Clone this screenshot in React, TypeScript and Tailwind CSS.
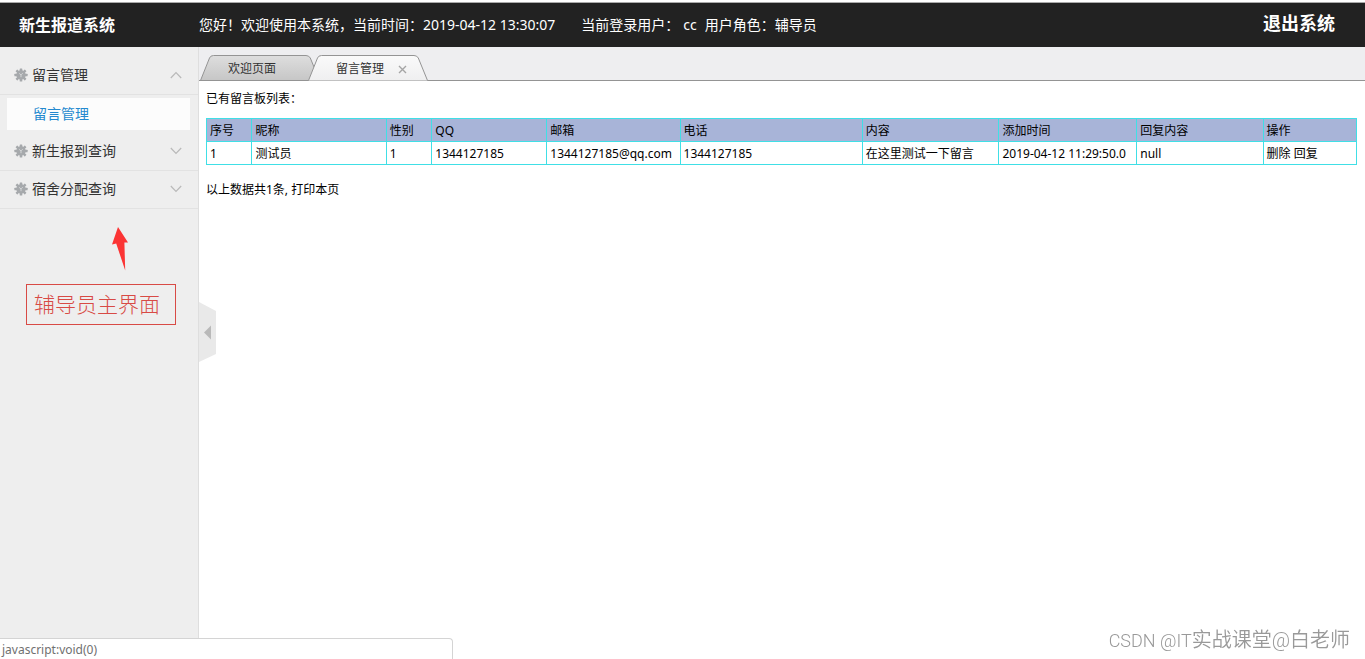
import { useState } from "react";

const columns = [
  { title: "序号", width: "w-[3.9%]", value: "1" },
  { title: "昵称", width: "w-[11.7%]", value: "测试员" },
  { title: "性别", width: "w-[3.9%]", value: "1" },
  { title: "QQ", width: "w-[10%]", value: "1344127185" },
  { title: "邮箱", width: "w-[11.6%]", value: "1344127185@qq.com" },
  { title: "电话", width: "w-[15.9%]", value: "1344127185" },
  { title: "内容", width: "w-[11.9%]", value: "在这里测试一下留言" },
  { title: "添加时间", width: "w-[12%]", value: "2019-04-12 11:29:50.0" },
  { title: "回复内容", width: "w-[11%]", value: "null" },
];

function Gear() {
  const teeth = [0, 45, 90, 135];
  return (
    <svg viewBox="0 0 14 14" className="h-3.5 w-3.5 shrink-0" aria-hidden="true">
      <g fill="#a6a9ac">
        {teeth.map((angle) => (
          <rect key={angle} x="5.7" y="0.4" width="2.6" height="13.2" rx="0.5" transform={`rotate(${angle} 7 7)`} />
        ))}
        <circle cx="7" cy="7" r="4.7" />
      </g>
      <path d="M5.2 5.4l1.8 1.5 1.7-1.7M7 7v2.2" fill="none" stroke="#d9dbdd" strokeWidth="0.9" />
    </svg>
  );
}

function Chevron({ up }: { up: boolean }) {
  return (
    <svg viewBox="0 0 12 8" className="h-2 w-3 shrink-0" fill="none" stroke="#b9b9b9" strokeWidth="1.2" aria-hidden="true">
      <path d={up ? "M0.8 7L6 1.5L11.2 7" : "M0.8 1L6 6.5L11.2 1"} />
    </svg>
  );
}

function MenuHead({ label, open, tall, onClick }: { label: string; open: boolean; tall?: boolean; onClick?: () => void }) {
  return (
    <button
      type="button"
      aria-expanded={open}
      onClick={onClick}
      className={`flex w-full items-center gap-1 border-b border-[#e2e2e2] pr-4 pl-3.5 text-left text-sm text-[#333] ${tall ? "h-12 pt-2" : "h-[38px] pb-0.5"}`}
    >
      <Gear />
      <span className="grow">{label}</span>
      <Chevron up={open} />
    </button>
  );
}

function TabShape({ active }: { active: boolean }) {
  return (
    <svg viewBox="0 0 120 26" preserveAspectRatio="none" className="absolute inset-0 h-full w-full" aria-hidden="true">
      <defs>
        <linearGradient id="idle-tab" x1="0" y1="0" x2="0" y2="1">
          <stop offset="0" stopColor="#dedede" />
          <stop offset="1" stopColor="#c6c6c6" />
        </linearGradient>
        <linearGradient id="active-tab" x1="0" y1="0" x2="0" y2="1">
          <stop offset="0" stopColor="#fafafa" />
          <stop offset="1" stopColor="#efeff0" />
        </linearGradient>
      </defs>
      <path
        d="M0.5 25.5L9.5 3Q10.5 0.5 13.5 0.5H106Q109 0.5 110.3 3L119.5 25.5"
        fill={active ? "url(#active-tab)" : "url(#idle-tab)"}
        stroke="#949494"
      />
      {!active && <path d="M0 25.5H120" stroke="#949494" />}
    </svg>
  );
}

export default function App() {
  const [open, setOpen] = useState(true);

  return (
    <div className="flex min-h-screen flex-col bg-white font-['Noto_Sans','Noto_Sans_CJK_SC',sans-serif] text-xs text-black">
      <header className="mt-0.5 flex h-[45px] items-center border-t border-[#aaa] bg-[#222] text-sm text-white">
        <h1 className="w-[199px] shrink-0 pl-[19px] text-base font-bold">新生报道系统</h1>
        <p className="flex grow whitespace-pre">
          <span>您好！欢迎使用本系统，当前时间：2019-04-12 13:30:07</span>
          <span className="ml-[26px]">当前登录用户：</span>
          <span className="ml-1">cc</span>
          <span className="ml-2">用户角色：辅导员</span>
        </p>
        <a href="#logout" className="mr-[30px] pb-1 text-lg font-bold">退出系统</a>
      </header>

      <div className="flex grow">
        <aside className="w-[199px] shrink-0 border-r border-[#dedede] bg-[#eee]">
          <nav>
            <MenuHead label="留言管理" open={open} tall onClick={() => setOpen(!open)} />
            {open && (
              <a href="#messages" className="mr-2 ml-[7px] mt-[3px] flex h-8 items-center bg-[#fcfcfc] pl-[26px] text-sm text-[#2489cf]">
                留言管理
              </a>
            )}
            <div className="mt-[3px]">
              <MenuHead label="新生报到查询" open={false} />
              <MenuHead label="宿舍分配查询" open={false} />
            </div>
          </nav>
          <svg viewBox="0 0 18 46" className="mt-4 ml-[111px] h-[46px] w-[18px]" aria-hidden="true">
            <path d="M7 2L17 17.5L13.4 17.5L14.2 45.5L5.2 18.5L1 19.5Z" fill="#fb3434" />
          </svg>
          <p className="mx-[22px] mt-[13px] ml-[26px] flex h-[41px] items-center border border-[#d84a45] pb-0.5 pl-[7px] text-[21px] font-light whitespace-nowrap text-[#d84a45]">
            辅导员主界面
          </p>
        </aside>

        <main className="relative min-w-0 grow">
          <div className="flex h-[34px] items-end border-b border-[#949494] bg-[#eeeef0] pl-px" role="tablist">
            <button type="button" role="tab" aria-selected="false" className="relative -mb-px h-[26px] w-[120px] pt-0.5 text-[#333]">
              <TabShape active={false} />
              <span className="relative pr-4">欢迎页面</span>
            </button>
            <div className="relative -mb-px -ml-3 flex h-[26px] w-[120px] items-center pt-0.5 pl-7 text-[#333]">
              <TabShape active />
              <button type="button" role="tab" aria-selected="true" className="relative">留言管理</button>
              <button type="button" aria-label="关闭" className="relative ml-3.5">
                <svg viewBox="0 0 9 9" className="h-[9px] w-[9px]" stroke="#a5a5a5" strokeWidth="1.4" aria-hidden="true">
                  <path d="M1 1L8 8M8 1L1 8" />
                </svg>
              </button>
            </div>
          </div>

          <div className="px-2 pt-2 pl-[7px]">
            <p className="leading-5">已有留言板列表：</p>
            <table className="mt-[9px] w-full table-fixed border-separate border-spacing-px bg-[#40dfe6] text-left">
              <thead>
                <tr className="h-[22px]">
                  {columns.map((c) => (
                    <th key={c.title} scope="col" className={`bg-[#a8b4d8] px-[3px] pt-0.5 font-normal ${c.width}`}>{c.title}</th>
                  ))}
                  <th scope="col" className="bg-[#a8b4d8] px-[3px] pt-0.5 font-normal">操作</th>
                </tr>
              </thead>
              <tbody>
                <tr className="h-[22px]">
                  {columns.map((c) => (
                    <td key={c.title} className="bg-white px-[3px] pt-0.5 whitespace-nowrap">{c.value}</td>
                  ))}
                  <td className="bg-white px-[3px] pt-0.5 whitespace-nowrap">
                    <a href="#delete">删除</a> <a href="#reply">回复</a>
                  </td>
                </tr>
              </tbody>
            </table>
            <p className="mt-[15px] leading-5">
              以上数据共1条, <a href="#print">打印本页</a>
            </p>
          </div>

          <button type="button" aria-label="收起菜单" className="absolute top-[255px] left-0">
            <svg viewBox="0 0 17 60" className="h-[60px] w-[17px]" aria-hidden="true">
              <path d="M0 0L17 9V52L0 60Z" fill="#e9e9e9" />
              <path d="M5 30.5L12 23.5V37.5Z" fill="#b9b9b9" />
            </svg>
          </button>
        </main>
      </div>

      <div className="fixed bottom-0 left-0 flex h-[21px] w-[453px] items-center rounded-tr border-t border-r border-[#d4d4d4] bg-white pt-0.5 pl-0.5 text-[#707070]">
        javascript:void(0)
      </div>
      <div className="fixed right-[15px] bottom-1 font-['Roboto','Noto_Sans_CJK_SC',sans-serif] text-[20px] leading-[30px] font-[350] text-[#999]">
        <span className="text-lg">CSDN @IT</span>实战课堂@白老师
      </div>
    </div>
  );
}
